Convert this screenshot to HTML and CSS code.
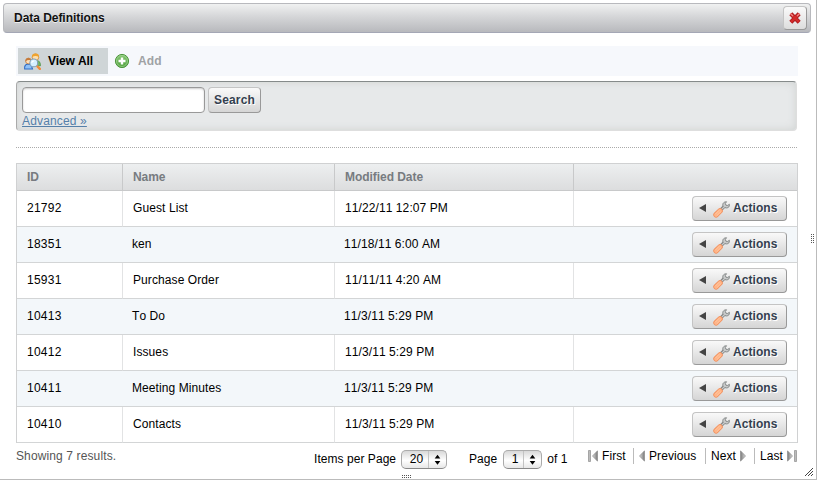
FILE: index.html
```html
<!DOCTYPE html>
<html lang="en">
<head>
<meta charset="utf-8">
<title>Data Definitions</title>
<link rel="stylesheet" href="styles.css">
</head>
<body>
<svg class="defs" width="0" height="0" aria-hidden="true">
  <defs>
    <linearGradient id="arrow" x1="0" x2="1"><stop offset="0" stop-color="#ddd"/><stop offset="1" stop-color="#777"/></linearGradient>
    <linearGradient id="green" x1="0" y1="0" x2="0" y2="1"><stop offset="0" stop-color="#8ac977"/><stop offset="1" stop-color="#4e9f3c"/></linearGradient>
    <symbol id="wrench" viewBox="0 0 16 16">
      <path d="M7.3 8.2L10.4 5.1" stroke="#888" stroke-width="2.8"/>
      <path d="M12.7 .7L11.6 2.3L12.2 4L13.9 4.2L15.4 3.1C15.8 5.1 14.6 6.5 12.7 6.5L11.1 6.2L8.9 8.4L7.6 7.1L9.6 5.1C8.5 2.8 9.9.7 12.7.7Z" fill="#c8caca" stroke="#808484" stroke-width=".9"/>
      <path d="M2.9 13L6.6 9.3" stroke="#f28f5c" stroke-width="5.2" stroke-linecap="round"/>
      <path d="M2.9 13L6.6 9.3" stroke="#ffb487" stroke-width="3.7" stroke-linecap="round"/>
      <path d="M2.2 12.4L6 8.6M3.6 13.8L7.4 10" stroke="#ffcda8" stroke-width=".7"/>
    </symbol>
    <symbol id="prev" viewBox="0 0 6 12"><path d="M5.5 .8V11.2L.5 6Z" fill="url(#arrow)" stroke="#8c8c8c" stroke-width=".7"/></symbol>
    <symbol id="bar" viewBox="0 0 3 12"><path d="M.5.5H2.5V11.5H.5Z" fill="#bbb" stroke="#8c8c8c" stroke-width=".7"/></symbol>
  </defs>
</svg>
<div class="dialog">
  <header class="titlebar">
    <h1>Data Definitions</h1>
    <button class="close" aria-label="Close"><svg width="14" height="14" viewBox="0 0 14 14"><path d="M2.8 2.8L11.2 11.2M11.2 2.8L2.8 11.2" stroke="#a81c20" stroke-width="4.2"/><path d="M2.8 2.8L11.2 11.2M11.2 2.8L2.8 11.2" stroke="#d22b2b" stroke-width="2.6"/><path d="M2.3 2.5L5 5M11.7 2.5L9 5" stroke="#f08a8a" stroke-width="1.1"/></svg></button>
  </header>
  <main class="content">
    <nav class="toolbar">
      <a class="tab current"><svg width="17" height="17" viewBox="0 0 16 16"><path d="M.6 15V13Q1 10.5 4 10.3Q7 10.5 8 15Z" fill="#8fc1f7" stroke="#306dc4"/><circle cx="4.2" cy="7.5" r="2.7" fill="#ffe0b8" stroke="#b86e30" stroke-width=".7"/><path d="M1.4 8Q1.2 4.6 4.3 4.6Q6.5 4.6 7 7Q3.5 6 1.4 8Z" fill="#c57a3a"/><path d="M8 12V8Q10 6.3 13.5 7.5Q15.6 8 15.5 12Z" fill="#78b96b" stroke="#488f45" stroke-width=".7"/><circle cx="10.8" cy="4" r="3.1" fill="#ffe0ad" stroke="#c77b24" stroke-width=".7"/><path d="M7.4 4Q7.2.2 11 .4Q14.4.3 14.1 4Q11 1.8 7.4 4Z" fill="#efa32f"/><path d="M12 12L14.9 14.9" stroke="#f28b38" stroke-width="2.2" stroke-linecap="round"/><circle cx="9.2" cy="9.3" r="3.7" fill="#d5efff" stroke="#7f9eb8" stroke-width="1"/><path d="M7.2 9.3Q7.6 7.3 9.6 7.5" stroke="#fff" fill="none"/></svg><span class="view-label">View All</span></a>
      <a class="tab add"><svg width="16" height="16" viewBox="0 0 16 16"><circle cx="8" cy="8" r="6.6" fill="url(#green)" stroke="#4e963e"/><circle cx="8" cy="8" r="5.5" fill="none" stroke="#a4d797" stroke-width=".7"/><path d="M8 4.5V11.5M4.5 8H11.5" stroke="#fff" stroke-width="2.4"/></svg><span>Add</span></a>
    </nav>
    <form class="search">
      <div class="search-row"><input type="text" aria-label="Search terms"><button class="button search-button" type="button">Search</button></div>
      <a class="advanced">Advanced »</a>
    </form>
    <div class="separator"></div>
    <table class="results">
      <colgroup><col class="col-id"><col class="col-name"><col class="col-date"><col class="col-actions"></colgroup>
      <thead><tr><th>ID</th><th>Name</th><th>Modified Date</th><th></th></tr></thead>
      <tbody>
        <tr><td class="id">21792</td><td>Guest List</td><td>11/22/11 12:07 PM</td><td><button class="button actions"><i></i><svg width="17" height="17"><use href="#wrench"/></svg><span>Actions</span></button></td></tr>
        <tr><td class="id">18351</td><td>ken</td><td>11/18/11 6:00 AM</td><td><button class="button actions"><i></i><svg width="17" height="17"><use href="#wrench"/></svg><span>Actions</span></button></td></tr>
        <tr><td class="id">15931</td><td>Purchase Order</td><td>11/11/11 4:20 AM</td><td><button class="button actions"><i></i><svg width="17" height="17"><use href="#wrench"/></svg><span>Actions</span></button></td></tr>
        <tr><td class="id">10413</td><td>To Do</td><td>11/3/11 5:29 PM</td><td><button class="button actions"><i></i><svg width="17" height="17"><use href="#wrench"/></svg><span>Actions</span></button></td></tr>
        <tr><td class="id">10412</td><td>Issues</td><td>11/3/11 5:29 PM</td><td><button class="button actions"><i></i><svg width="17" height="17"><use href="#wrench"/></svg><span>Actions</span></button></td></tr>
        <tr><td class="id">10411</td><td>Meeting Minutes</td><td>11/3/11 5:29 PM</td><td><button class="button actions"><i></i><svg width="17" height="17"><use href="#wrench"/></svg><span>Actions</span></button></td></tr>
        <tr><td class="id">10410</td><td>Contacts</td><td>11/3/11 5:29 PM</td><td><button class="button actions"><i></i><svg width="17" height="17"><use href="#wrench"/></svg><span>Actions</span></button></td></tr>
      </tbody>
    </table>
    <footer class="pager">
      <div class="summary">Showing 7 results.</div>
      <div class="per-page"><span>Items per Page</span><div class="select wide"><b>20</b><svg width="17" height="18" viewBox="0 0 17 18"><path d="M5.5 8L8.5 4L11.5 8ZM5.5 10.5L8.5 14.5L11.5 10.5Z"/></svg></div></div>
      <div class="page-select"><span>Page</span><div class="select"><b>1</b><svg width="17" height="18" viewBox="0 0 17 18"><path d="M5.5 8L8.5 4L11.5 8ZM5.5 10.5L8.5 14.5L11.5 10.5Z"/></svg></div><span class="of">of 1</span></div>
      <nav class="links">
        <a class="first"><svg width="3" height="12"><use href="#bar"/></svg><svg class="near" width="6" height="12"><use href="#prev"/></svg>First</a>
        <a class="previous"><svg width="6" height="12"><use href="#prev"/></svg>Previous</a>
        <a class="next">Next<svg class="flip" width="6" height="12"><use href="#prev"/></svg></a>
        <a class="last">Last<svg class="flip" width="6" height="12"><use href="#prev"/></svg><svg width="3" height="12"><use href="#bar"/></svg></a>
      </nav>
    </footer>
  </main>
  <svg class="grip-right" width="4" height="10"><path d="M.5 0V10M2.5 0V10" stroke="#555" stroke-dasharray="1 1"/></svg>
  <svg class="grip-bottom" width="10" height="4"><path d="M0 .5H10M0 2.5H10" stroke="#555" stroke-dasharray="1 1"/></svg>
  <svg class="grip-corner" width="8" height="8"><path d="M0 8L8 0M3 8L8 3M6 8L8 6" stroke="#444" stroke-width="1"/></svg>
</div>
</body>
</html>
```
FILE: styles.css
```css
* { box-sizing: border-box; }
body { margin: 0; background: #fff; color: #000; font: 12px/16px "Liberation Sans", Arial, sans-serif; letter-spacing: .09px; font-kerning: none; }
.defs { position: absolute; }
svg { display: block; flex: none; }
.dialog { position: relative; width: 817px; height: 480px; padding: 3px; border-right: 1px solid #bbb; border-bottom: 1px solid #bbb; overflow: hidden; }
.titlebar { width: 808px; height: 30px; display: flex; align-items: center; justify-content: space-between; padding: 0 3px 0 10px; border: 1px solid #b8b9bd; border-bottom-color: #a4a7b5; border-radius: 4px; background: linear-gradient(#f0f1f1, #d5d6d8 45%, #b8b9bd); }
h1 { margin: 0; color: #111; font-size: 12px; line-height: 16px; letter-spacing: -.04px; text-shadow: 0 1px #eee; }
.close { width: 24px; height: 24px; display: grid; place-items: center; padding: 0; border: 1px solid #b9b9b9; border-color: #c5c5c5 #999 #999 #c5c5c5; border-radius: 4px; background: linear-gradient(#fafafa, #ddd); }
.content { width: 782px; margin: 13px 0 0 13px; }
.toolbar { height: 30px; display: flex; align-items: center; padding-left: 2px; background: #f6f8fc; font-weight: bold; }
.tab { height: 26px; display: flex; align-items: center; }
.current { width: 90px; padding-left: 6px; background: #cfd5d7; }
.view-label { margin-left: 7px; letter-spacing: -.14px; }
.add { padding-left: 6px; color: #9fa2a5; }
.add span { margin-left: 8px; letter-spacing: .1px; }
.search { width: 781px; height: 50px; margin-top: 5px; padding: 5px; border: 1px solid #dedede; border-top-color: #858a8a; border-left-color: #aaa; border-radius: 4px; background: #e7e9ea; box-shadow: inset 0 0 9px #cfd2d1; }
.search-row { display: flex; gap: 3px; }
.search input { width: 183px; height: 26px; border: 1px solid #999; border-radius: 4px; box-shadow: inset 0 1px 2px #ccc; }
.button { border: 1px solid #c4c4c4; border-right-color: #999; border-bottom-color: #999; border-radius: 4px; background: linear-gradient(#f9f9f9, #d5d5d5); color: #34404f; font: bold 12px/16px "Liberation Sans", Arial, sans-serif; text-shadow: 1px 1px #fff; }
.search-button { width: 53px; height: 26px; padding: 0 0 1px; letter-spacing: .15px; }
.advanced { display: block; width: max-content; margin-top: 1px; line-height: 14px; color: #5580a9; letter-spacing: .15px; text-decoration: underline; text-underline-offset: 1px; }
.separator { height: 1px; margin-top: 16px; background: repeating-linear-gradient(90deg, #aaa 0 1px, transparent 1px 2px); }
.results { width: 782px; height: 280px; margin-top: 15px; table-layout: fixed; border-collapse: separate; border-spacing: 0; border: solid #d0d1d2; border-width: 1px 1px 0; }
.col-id { width: 105px; }
.col-name { width: 212px; }
.col-date { width: 239px; }
.col-actions { width: 224px; }
th { height: 27px; padding: 0 10px; border-bottom: 1px solid #c8c9ca; background: linear-gradient(#edeff0, #dcddde); color: #777b80; text-align: left; letter-spacing: -.05px; }
td { height: 36px; padding: 0 10px 2px; border-bottom: 1px solid #d3d5d6; }
td:last-child { padding-bottom: 0; }
th + th { border-left: 1px solid #c8c9ca; }
td + td { border-left: 1px solid #e2e3e4; }
tr:nth-child(even) td { background: #f3f7fa; border-left: 0; }
td.id { letter-spacing: .25px; }
.actions { width: 95px; height: 25px; display: flex; align-items: center; margin-left: auto; padding: 0 0 0 6px; }
.actions i { border: solid transparent; border-width: 4px 7px 4px 0; border-right-color: #444; margin-bottom: 1px; }
.actions svg { margin: 1px 0 0 7px; }
.actions span { margin: 0 0 2px 3px; letter-spacing: .07px; }
.pager { height: 32px; display: flex; align-items: flex-start; }
.summary { width: 298px; padding-top: 5px; color: #555; letter-spacing: .12px; }
.per-page { width: 155px; display: flex; align-items: center; padding-top: 7px; letter-spacing: .05px; }
.per-page > span, .page-select > span { margin-bottom: 1px; }
.page-select { width: 119px; display: flex; align-items: center; padding-top: 7px; letter-spacing: .05px; }
.select { width: 39px; height: 19px; display: flex; justify-content: flex-end; margin-left: 6px; border: 1px solid #aaa; border-bottom-color: #888; border-radius: 5px; background: linear-gradient(#d8d8d8, #fff 55%, #e7e7e7); }
.wide { width: 46px; margin-left: 5px; }
.select b { flex: 1; padding-left: 3px; font-weight: normal; text-align: center; line-height: 17px; }
.select svg { border-left: 1px solid #c3c3c3; height: 17px; width: 18px; }
.page-select .of { margin-left: 5px; }
.links { display: flex; padding-top: 5px; }
.links a { height: 16px; display: flex; align-items: center; border-left: 1px solid #bbb; white-space: nowrap; }
.links .first { width: 45px; border: 0; }
.links .near { margin: 0 4px 0 1px; }
.links .previous { width: 72px; padding-left: 5px; }
.previous svg { margin-right: 4px; }
.links .next { width: 49px; padding-left: 5px; }
.links .last { padding-left: 5px; }
.flip { margin: 0 1px 0 4px; transform: scaleX(-1); }
.grip-right { position: absolute; right: 1px; top: 234px; }
.grip-bottom { position: absolute; left: 402px; bottom: 0; }
.grip-corner { position: absolute; right: 3px; bottom: 3px; }
```
